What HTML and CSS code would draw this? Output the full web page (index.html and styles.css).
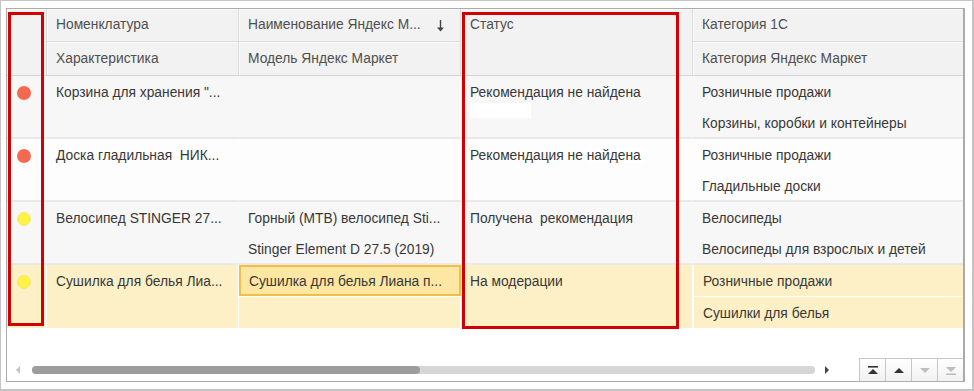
FILE: index.html
```html
<!DOCTYPE html>
<html lang="ru">
<head>
  <meta charset="UTF-8" />
  <title>Товары Яндекс Маркет</title>
  <link rel="stylesheet" href="styles.css">
</head>
<body>
  <div class="window">
    <div class="panel">

      <!-- Таблица -->
      <div class="grid">
        <div class="hd mark-hd"></div>
        <div class="hd">Номенклатура</div>
        <div class="hd sortable">
          <span>Наименование Яндекс М...</span>
          <svg class="sort" width="9" height="12" viewBox="0 0 9 12"><path d="M4.5 0v9" stroke="#444" stroke-width="1.4"/><path d="M1 7.5h7L4.5 11.5z" fill="#444"/></svg>
        </div>
        <div class="hd span2">Статус</div>
        <div class="hd last">Категория 1С</div>
        <div class="hd hd2">Характеристика</div>
        <div class="hd hd2">Модель Яндекс Маркет</div>
        <div class="hd hd2 last">Категория Яндекс Маркет</div>

        <!-- строка 1 -->
        <div class="c alt span2 row-end mark"><span class="dot red"></span></div>
        <div class="c alt span2 row-end">Корзина для хранения "...</div>
        <div class="c alt"></div>
        <div class="c alt span2 row-end status">Рекомендация не найдена<span class="patch"></span></div>
        <div class="c alt last">Розничные продажи</div>
        <div class="c alt sub2 row-end"></div>
        <div class="c alt sub2 row-end last">Корзины, коробки и контейнеры</div>

        <!-- строка 2 -->
        <div class="c span2 row-end mark"><span class="dot red"></span></div>
        <div class="c span2 row-end">Доска гладильная&nbsp; НИК...</div>
        <div class="c"></div>
        <div class="c span2 row-end status">Рекомендация не <span class="hl">найдена</span></div>
        <div class="c last">Розничные продажи</div>
        <div class="c sub2 row-end"></div>
        <div class="c sub2 row-end last">Гладильные доски</div>

        <!-- строка 3 -->
        <div class="c alt span2 row-end mark"><span class="dot yellow"></span></div>
        <div class="c alt span2 row-end">Велосипед STINGER 27...</div>
        <div class="c alt">Горный (MTB) велосипед Sti...</div>
        <div class="c alt span2 row-end status">Получена&nbsp; рекомендация</div>
        <div class="c alt last">Велосипеды</div>
        <div class="c alt sub2 row-end">Stinger Element D 27.5 (2019)</div>
        <div class="c alt sub2 row-end last">Велосипеды для взрослых и детей</div>

        <!-- строка 4 (текущая) -->
        <div class="c sel span2 mark"><span class="dot yellow"></span></div>
        <div class="c sel span2">Сушилка для белья Лиа...</div>
        <div class="c sel current">Сушилка для белья Лиана п...</div>
        <div class="c sel span2 status">На модерации</div>
        <div class="c sel last">Розничные продажи</div>
        <div class="c sel sub2"></div>
        <div class="c sel sub2 last">Сушилки для белья</div>
      </div>

      <!-- Прокрутка и кнопки -->
      <div class="footer">
        <div class="scroll">
          <span class="arrow left"></span>
          <div class="track"><div class="thumb"></div></div>
          <span class="arrow right"></span>
        </div>
        <div class="nav">
          <button class="nav-btn"><svg width="12" height="9" viewBox="0 0 12 9"><rect x="1" y="0" width="10" height="1.6" fill="#333"/><path d="M1 8h10L6 3z" fill="#333"/></svg></button>
          <button class="nav-btn"><svg width="12" height="9" viewBox="0 0 12 9"><path d="M1 7h10L6 2z" fill="#333"/></svg></button>
          <button class="nav-btn"><svg width="12" height="9" viewBox="0 0 12 9"><path d="M1 2h10L6 7z" fill="#bdbdbd"/></svg></button>
          <button class="nav-btn"><svg width="12" height="9" viewBox="0 0 12 9"><path d="M1 1h10L6 6z" fill="#bdbdbd"/><rect x="1" y="7.4" width="10" height="1.6" fill="#bdbdbd"/></svg></button>
        </div>
      </div>

      <!-- Выделение рамками -->
      <div class="frame frame-mark"></div>
      <div class="frame frame-status"></div>
    </div>
  </div>
</body>
</html>
```

FILE: styles.css
```css
body {
  margin: 0;
  font-family: "Liberation Sans", Arial, sans-serif;
  font-size: 13.8px;
  color: #3a3a3a;
  background: #fff;
}

.window {
  width: 974px;
  height: 391px;
  box-sizing: border-box;
  border: 1px solid #c4c4c4;
  border-right-width: 2px;
  border-bottom-width: 2px;
  padding: 7px 0 0 5px;
}

.panel {
  position: relative;
  width: 959px;
  height: 374px;
  box-sizing: border-box;
  border: 1px solid #ababab;
  border-right-width: 2px;
  display: flex;
  flex-direction: column;
}

.grid {
  display: grid;
  grid-template-columns: 40px 192px 222px 232px 1fr;
  grid-template-rows: 33px 34px repeat(4, 31px 32px);
}

/* Шапка */
.hd {
  background: #f2f2f2;
  color: #4f4f4f;
  line-height: 32px;
  padding-left: 9px;
  white-space: nowrap;
  overflow: hidden;
  box-sizing: border-box;
  border-right: 1px solid #dcdcdc;
  border-bottom: 1px solid #dcdcdc;
  box-shadow: inset 1px 1px 0 #fafafa;
}

.hd2 {
  line-height: 34px;
  border-bottom-color: #d4d4d4;
}

.mark-hd {
  grid-row: span 2;
  border-bottom-color: #d4d4d4;
}

.hd.span2 {
  border-bottom-color: #d4d4d4;
}

.sortable {
  display: flex;
  justify-content: space-between;
  align-items: center;
  padding-right: 15px;
}

.sort {
  margin-top: 1px;
}

/* Ячейки */
.c {
  background: #fdfdfd;
  line-height: 31px;
  padding: 1px 0 0 9px;
  white-space: nowrap;
  overflow: hidden;
  box-sizing: border-box;
  border-right: 1px solid transparent;
  color: #383838;
}

.c.alt {
  background: #f7f7f7;
}

.span2 {
  grid-row: span 2;
}

.last {
  border-right: none;
}

.row-end {
  border-bottom: 2px solid #e9e9e9;
}

.status {
  position: relative;
}

.patch {
  position: absolute;
  left: 9px;
  top: 27px;
  width: 61px;
  height: 15px;
  background: #fff;
}

.hl {
  background: #fff;
  padding: 0 5px 0 1px;
  margin-left: -1px;
}

.c.sel {
  background: #fdf0c6;
  border-right-color: #fff;
}

.c.sel.sub2 {
  border-top: 1px solid #fff;
}

.c.sel.last {
  border-left: 1px solid #fff;
}

.c.sel.current {
  background: #fde7a2;
  border: 2px solid #f1bf45;
  line-height: 27px;
  padding-left: 8px;
}

.mark {
  padding: 10px 0 0 10px;
}

.dot {
  display: block;
  width: 14px;
  height: 14px;
  border-radius: 50%;
  box-sizing: border-box;
}

.dot.red {
  background: #f46a50;
}

.dot.yellow {
  background: #fff244;
  border: 1px solid #f3e77a;
}

/* Нижняя панель */
.footer {
  flex: 1;
  display: flex;
  align-items: flex-end;
}

.scroll {
  flex: 1;
  height: 22px;
  display: flex;
  align-items: center;
  padding-left: 9px;
}

.arrow {
  width: 0;
  height: 0;
  border-top: 4px solid transparent;
  border-bottom: 4px solid transparent;
}

.arrow.left {
  border-right: 4px solid #c2c2c2;
  margin-right: 12px;
}

.arrow.right {
  border-left: 4px solid #444;
  margin-left: 10px;
}

.track {
  width: 783px;
  height: 8px;
  border-radius: 4px;
  background: #d6d6d6;
}

.thumb {
  width: 388px;
  height: 100%;
  border-radius: 4px;
  background: #9d9d9d;
}

.nav {
  display: flex;
}

.nav-btn {
  width: 26px;
  height: 23px;
  margin: 0;
  padding: 0;
  border: 1px solid #c6c6c6;
  border-right: none;
  border-bottom: none;
  background: linear-gradient(#fff, #f1f1f1);
  display: flex;
  align-items: center;
  justify-content: center;
}

/* Красные рамки поверх таблицы */
.frame {
  position: absolute;
  top: 3px;
  border: 3px solid #d20000;
  box-sizing: border-box;
  pointer-events: none;
}

.frame-mark {
  left: 1px;
  width: 36px;
  height: 314px;
}

.frame-status {
  left: 455px;
  width: 217px;
  height: 317px;
}
```
